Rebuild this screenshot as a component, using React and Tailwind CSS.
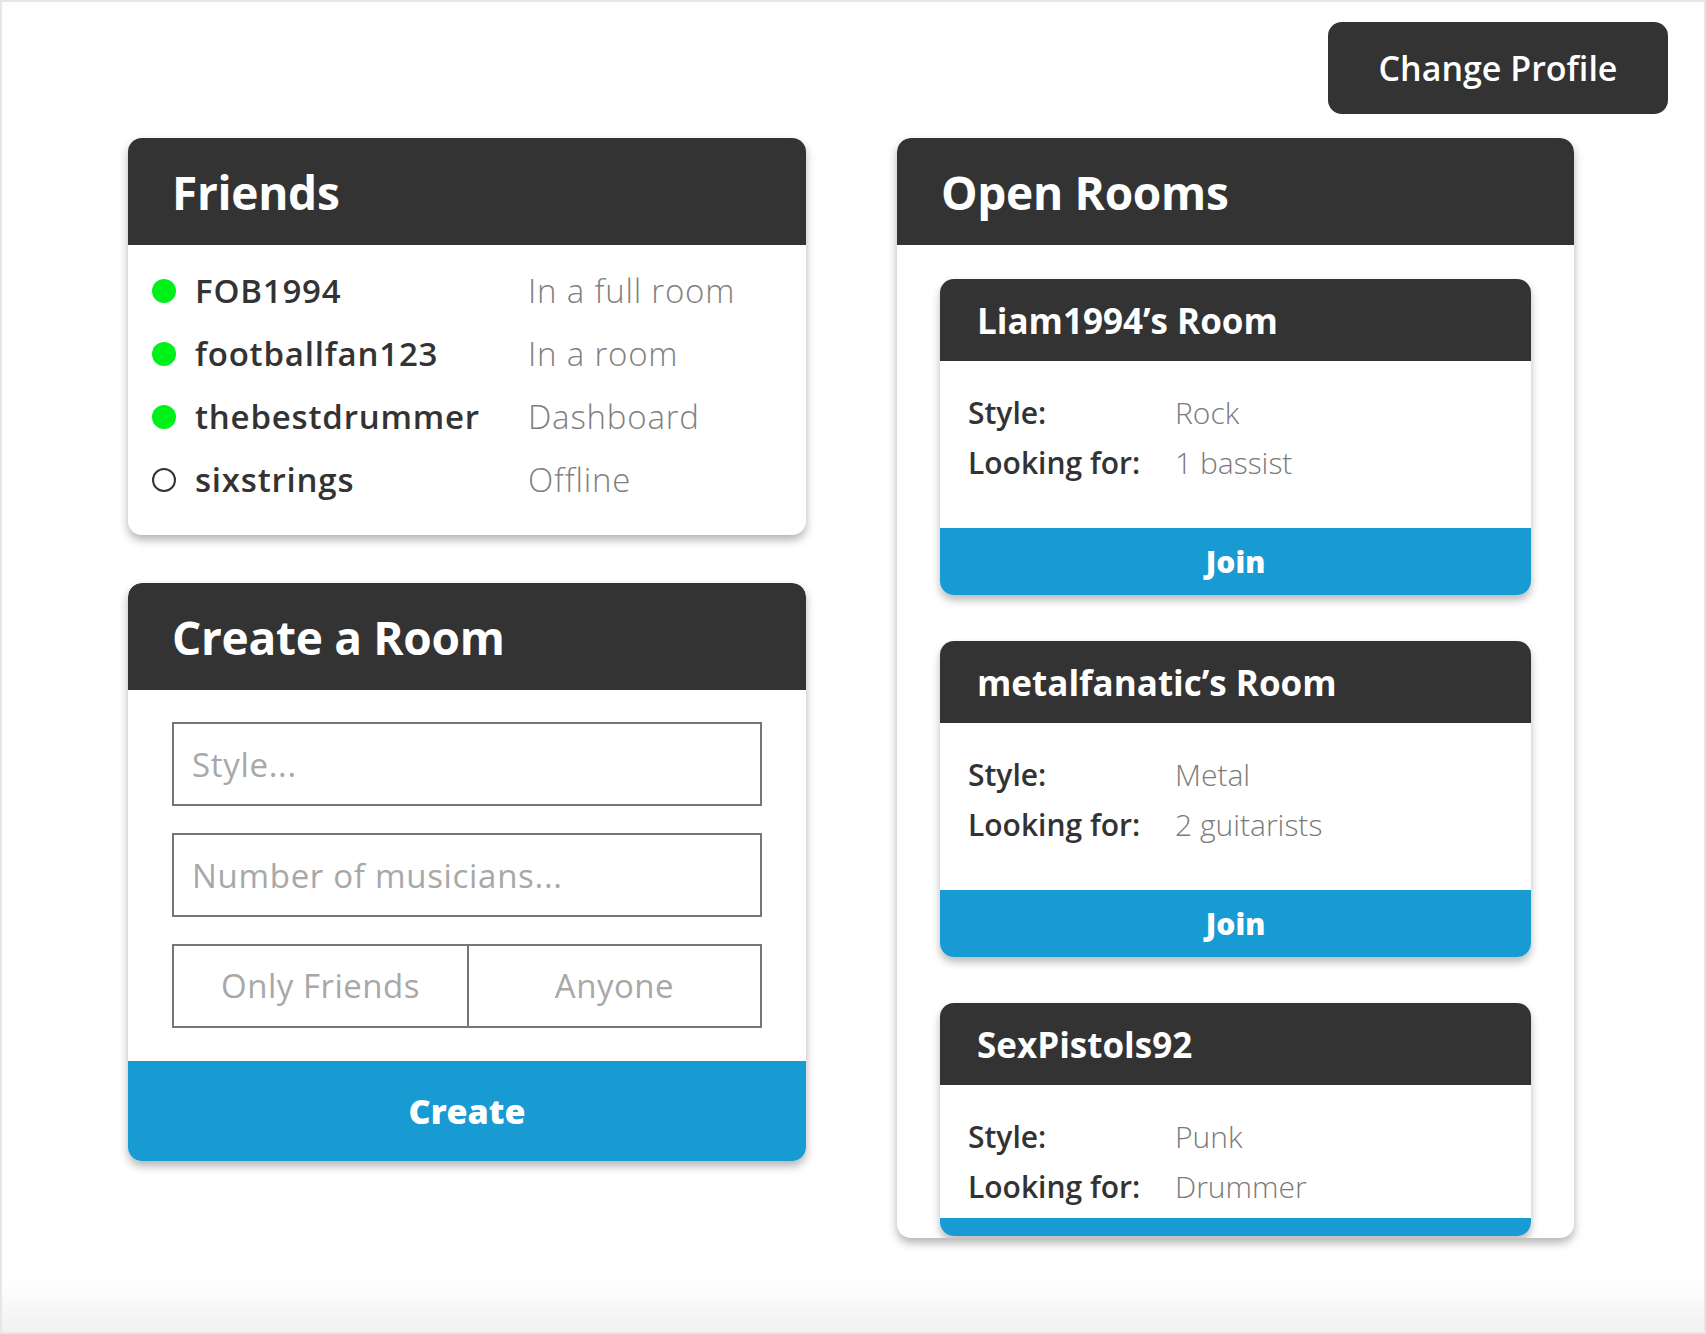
import { useState } from "react";

const friends = [
  { name: "FOB1994", status: "In a full room", online: true },
  { name: "footballfan123", status: "In a room", online: true },
  { name: "thebestdrummer", status: "Dashboard", online: true },
  { name: "sixstrings", status: "Offline", online: false },
];

const rooms = [
  { title: "Liam1994’s Room", style: "Rock", lookingFor: "1 bassist" },
  { title: "metalfanatic’s Room", style: "Metal", lookingFor: "2 guitarists" },
  { title: "SexPistols92", style: "Punk", lookingFor: "Drummer", cut: true },
];

function CardHeader({ children }) {
  return (
    <div className="h-[107px] bg-[#333333] rounded-t-[14px] flex items-center pl-[44px]">
      <h2 className="text-white text-[46px] font-bold leading-none tracking-[-0.3px]">{children}</h2>
    </div>
  );
}

function RoomCard({ room }) {
  return (
    <div className="rounded-[14px] bg-white shadow-[0_5px_8px_rgba(0,0,0,0.28)] overflow-hidden shrink-0">
      <div className="h-[82px] bg-[#333333] flex items-center pl-[37px]">
        <h3 className="text-white text-[35px] font-bold leading-none">{room.title}</h3>
      </div>
      <div className={room.cut ? "pt-[26px] pb-[7px] pl-[28px]" : "pt-[26px] pb-[41px] pl-[28px]"}>
        <div className="flex h-[50px] items-center">
          <span className="w-[207px] text-[30px] font-semibold text-[#333333]">Style:</span>
          <span className="text-[30px] font-light text-[#7a7a7a]">{room.style}</span>
        </div>
        <div className="flex h-[50px] items-center">
          <span className="w-[207px] text-[30px] font-semibold text-[#333333]">Looking for:</span>
          <span className="text-[30px] font-light text-[#7a7a7a]">{room.lookingFor}</span>
        </div>
      </div>
      {room.cut ? (
        <div className="h-[18px] bg-[#189ad3]"></div>
      ) : (
        <button className="w-full h-[67px] bg-[#189ad3] text-white text-[30px] font-extrabold">
          Join
        </button>
      )}
    </div>
  );
}

export default function App() {
  const [privacy, setPrivacy] = useState(null);

  return (
    <div className="w-[1706px] h-[1334px] border-2 border-[#e6e6e6] bg-[linear-gradient(to_bottom,#ffffff_96%,#f1f1f1)] font-['Open_Sans','Noto_Sans',sans-serif] overflow-hidden">
      {/* Top bar */}
      <div className="flex justify-end pt-[20px] pr-[36px]">
        <button className="w-[340px] h-[92px] rounded-[14px] bg-[#333333] text-white text-[34px] font-semibold">
          Change Profile
        </button>
      </div>

      <div className="flex gap-[91px] pl-[126px] mt-[24px]">
        {/* Left column */}
        <div className="w-[678px] flex flex-col gap-[48px]">
          {/* Friends */}
          <div className="rounded-[14px] bg-white shadow-[0_5px_10px_rgba(0,0,0,0.3)]">
            <CardHeader>Friends</CardHeader>
            <div className="pt-[14px] pb-[24px] pl-[24px]">
              {friends.map((f) => (
                <div key={f.name} className="flex items-center h-[63px]">
                  <span
                    className={
                      f.online
                        ? "w-[24px] h-[24px] rounded-full bg-[#00f01a]"
                        : "w-[24px] h-[24px] rounded-full border-2 border-[#333333]"
                    }
                  ></span>
                  <span className="w-[333px] ml-[19px] text-[33px] font-semibold text-[#333333] tracking-[0.8px]">
                    {f.name}
                  </span>
                  <span className="text-[33px] font-light text-[#808080] tracking-[0.8px]">{f.status}</span>
                </div>
              ))}
            </div>
          </div>

          {/* Create a Room */}
          <div className="rounded-[14px] bg-white shadow-[0_5px_10px_rgba(0,0,0,0.3)] overflow-hidden">
            <CardHeader>Create a Room</CardHeader>
            <div className="px-[44px] pt-[32px] pb-[33px] flex flex-col gap-[27px]">
              <input
                placeholder="Style..."
                className="h-[84px] border-2 border-[#767676] pl-[18px] text-[33px] tracking-[0.7px] text-[#333] placeholder:text-[#a8a8a8] outline-none"
              />
              <input
                placeholder="Number of musicians..."
                className="h-[84px] border-2 border-[#767676] pl-[18px] text-[33px] tracking-[0.7px] text-[#333] placeholder:text-[#a8a8a8] outline-none"
              />
              <div className="grid grid-cols-2 h-[84px] border-2 border-[#767676]">
                <button
                  onClick={() => setPrivacy("friends")}
                  className={
                    privacy === "friends"
                      ? "text-[33px] tracking-[0.5px] text-[#333]"
                      : "text-[33px] tracking-[0.5px] text-[#a8a8a8]"
                  }
                >
                  Only Friends
                </button>
                <button
                  onClick={() => setPrivacy("anyone")}
                  className={
                    privacy === "anyone"
                      ? "border-l-2 border-[#767676] text-[33px] tracking-[0.5px] text-[#333]"
                      : "border-l-2 border-[#767676] text-[33px] tracking-[0.5px] text-[#a8a8a8]"
                  }
                >
                  Anyone
                </button>
              </div>
            </div>
            <button className="w-full h-[100px] bg-[#189ad3] text-white text-[34px] font-extrabold">
              Create
            </button>
          </div>
        </div>

        {/* Right column */}
        <div className="w-[677px] h-[1100px] rounded-[14px] bg-white shadow-[0_5px_10px_rgba(0,0,0,0.3)] overflow-hidden flex flex-col">
          <CardHeader>Open Rooms</CardHeader>
          <div className="flex-1 overflow-hidden px-[43px] pt-[34px] flex flex-col gap-[46px]">
            {rooms.map((r) => (
              <RoomCard key={r.title} room={r} />
            ))}
          </div>
        </div>
      </div>
    </div>
  );
}
